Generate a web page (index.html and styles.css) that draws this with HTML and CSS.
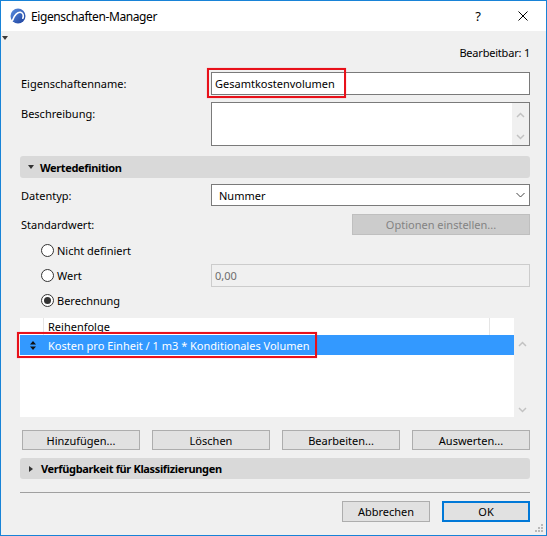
FILE: index.html
```html
<!DOCTYPE html>
<html lang="de">
<head>
<meta charset="utf-8">
<title>Eigenschaften-Manager</title>
<link rel="stylesheet" href="styles.css">
</head>
<body>
<div class="window">
  <div class="titlebar">
    <svg class="app-icon" width="16" height="16" viewBox="0 0 16 16">
      <defs>
        <linearGradient id="lg" x1="0" y1="0" x2="1" y2="1">
          <stop offset="0" stop-color="#5b8fe0"/>
          <stop offset="1" stop-color="#1c3f9c"/>
        </linearGradient>
      </defs>
      <circle cx="8" cy="8" r="7.5" fill="url(#lg)"/>
      <path d="M2.6 12.2 C4.2 7 7.6 3.6 11 4.4 C13.2 5 13.8 7.8 12.8 10.2" fill="none" stroke="#fff" stroke-width="1.6" stroke-linecap="round"/>
    </svg>
    <span class="title">Eigenschaften-Manager</span>
    <span class="help">?</span>
    <svg class="close" width="10" height="10" viewBox="0 0 10 10">
      <path d="M0.5 0.5 L9.5 9.5 M9.5 0.5 L0.5 9.5" stroke="#000" stroke-width="1"/>
    </svg>
  </div>

  <div class="content">
    <span class="corner-arrow"></span>
    <div class="editable">Bearbeitbar: 1</div>

    <div class="row row-name">
      <div class="label">Eigenschaftenname:</div>
      <div class="textbox">Gesamtkostenvolumen<span class="mark mark-name"></span></div>
    </div>

    <div class="row row-desc">
      <div class="label">Beschreibung:</div>
      <div class="textarea">
        <div class="vscroll">
          <svg class="chev" width="9" height="6" viewBox="0 0 9 6"><path d="M1 5 L4.5 1.5 L8 5" fill="none" stroke="#c2c2c2" stroke-width="1.5"/></svg>
          <svg class="chev" width="9" height="6" viewBox="0 0 9 6"><path d="M1 1 L4.5 4.5 L8 1" fill="none" stroke="#c2c2c2" stroke-width="1.5"/></svg>
        </div>
      </div>
    </div>

    <div class="section section-open"><span class="tri-down"></span>Wertedefinition</div>

    <div class="row row-type">
      <div class="label">Datentyp:</div>
      <div class="select">
        <span>Nummer</span>
        <svg width="9" height="6" viewBox="0 0 9 6"><path d="M0.5 1 L4.5 5 L8.5 1" fill="none" stroke="#444" stroke-width="1"/></svg>
      </div>
    </div>

    <div class="row row-default">
      <div class="label">Standardwert:</div>
      <div class="btn btn-disabled btn-options">Optionen einstellen...</div>
    </div>

    <div class="radios">
      <div class="radio-row">
        <div class="radio-opt"><span class="radio"></span>Nicht definiert</div>
      </div>
      <div class="radio-row">
        <div class="radio-opt"><span class="radio"></span>Wert</div>
        <div class="textbox textbox-disabled">0,00</div>
      </div>
      <div class="radio-row">
        <div class="radio-opt"><span class="radio radio-checked"></span>Berechnung</div>
      </div>
    </div>

    <div class="list-wrap">
      <div class="list">
        <div class="list-head">
          <div class="col-icon"></div>
          <div class="col-main">Reihenfolge</div>
          <div class="col-end"></div>
        </div>
        <div class="list-row selected">
          <div class="col-icon sort-icon">
            <svg width="6" height="9" viewBox="0 0 6 9"><path d="M3 0 L6 3.5 L0 3.5 Z M0 5.5 L6 5.5 L3 9 Z" fill="#111"/></svg>
          </div>
          <div class="col-main">Kosten pro Einheit / 1 m3 * Konditionales Volumen</div>
          <span class="mark mark-row"></span>
        </div>
      </div>
      <div class="list-scroll">
        <svg class="chev" width="9" height="6" viewBox="0 0 9 6"><path d="M1 5 L4.5 1.5 L8 5" fill="none" stroke="#c2c2c2" stroke-width="1.5"/></svg>
        <svg class="chev" width="9" height="6" viewBox="0 0 9 6"><path d="M1 1 L4.5 4.5 L8 1" fill="none" stroke="#c2c2c2" stroke-width="1.5"/></svg>
      </div>
    </div>

    <div class="actions">
      <div class="btn">Hinzufügen...</div>
      <div class="btn">Löschen</div>
      <div class="btn">Bearbeiten...</div>
      <div class="btn">Auswerten...</div>
    </div>

    <div class="section section-closed"><span class="tri-right"></span>Verfügbarkeit für Klassifizierungen</div>

    <div class="separator"></div>

    <div class="footer">
      <div class="btn btn-footer">Abbrechen</div>
      <div class="btn btn-footer btn-default">OK</div>
    </div>
  </div>

  <svg class="grip" width="10" height="10" viewBox="0 0 10 10">
    <rect x="6" y="0" width="2" height="2" fill="#b9b9b9"/>
    <rect x="3" y="3" width="2" height="2" fill="#b9b9b9"/>
    <rect x="6" y="3" width="2" height="2" fill="#b9b9b9"/>
    <rect x="0" y="6" width="2" height="2" fill="#b9b9b9"/>
    <rect x="3" y="6" width="2" height="2" fill="#b9b9b9"/>
    <rect x="6" y="6" width="2" height="2" fill="#b9b9b9"/>
  </svg>
</div>
</body>
</html>
```

FILE: styles.css
```css
* {
  box-sizing: border-box;
  margin: 0;
  padding: 0;
}

html, body {
  width: 547px;
  height: 536px;
  overflow: hidden;
}

body {
  font-family: "Noto Sans", "Open Sans", sans-serif;
  font-size: 11px;
  color: #000;
  background: #fff;
}

.window {
  width: 547px;
  height: 536px;
  border: 1px solid #1883d7;
  background: #f0f0f0;
  display: flex;
  flex-direction: column;
  position: relative;
}

/* Title bar */
.titlebar {
  flex: none;
  height: 30px;
  background: #fff;
  display: flex;
  align-items: center;
  padding-left: 9px;
}

.app-icon {
  flex: none;
}

.title {
  margin-left: 5px;
  font-size: 12px;
  letter-spacing: -0.4px;
}

.help {
  margin-left: auto;
  width: 14px;
  text-align: center;
  font-size: 13px;
  margin-right: 33px;
}

.close {
  margin-right: 18px;
}

/* Content */
.content {
  flex: 1;
  position: relative;
  padding: 0 16px 0 19px;
  display: flex;
  flex-direction: column;
}

.corner-arrow {
  position: absolute;
  left: 1px;
  top: 5px;
  width: 0;
  height: 0;
  border-left: 3px solid transparent;
  border-right: 3px solid transparent;
  border-top: 4px solid #3a3a3a;
}

.editable {
  margin-top: 15px;
  height: 14px;
  line-height: 14px;
  text-align: right;
  letter-spacing: -0.2px;
}

.row {
  display: grid;
  grid-template-columns: 191px 319px;
}

.label {
  padding-left: 1px;
  align-self: center;
}

.row-name {
  margin-top: 12px;
  height: 23px;
}

.textbox {
  position: relative;
  height: 23px;
  border: 1px solid #7a7a7a;
  background: #fff;
  padding-left: 3px;
  display: flex;
  align-items: center;
}

.textbox-disabled {
  border-color: #cccccc;
  background: #f0f0f0;
  color: #6d6d6d;
}

.mark {
  position: absolute;
  border: 2px solid #e8111a;
  box-shadow: 0 0 1px 0 rgba(232, 17, 26, 0.45);
  pointer-events: none;
}

.mark-name {
  left: -5px;
  top: -5px;
  width: 139px;
  height: 30px;
}

.row-desc {
  margin-top: 7px;
  height: 44px;
}

.row-desc .label {
  align-self: start;
  padding-top: 4px;
}

.textarea {
  border: 1px solid #7a7a7a;
  background: #fff;
  display: flex;
  justify-content: flex-end;
}

.vscroll {
  width: 17px;
  background: #f0f0f0;
  display: flex;
  flex-direction: column;
  align-items: center;
  justify-content: space-between;
  padding: 9px 0 5px;
}

.chev {
  display: block;
}

/* Sections */
.section {
  height: 22px;
  background: #d9d9d9;
  border-radius: 3px;
  display: flex;
  align-items: center;
  padding-left: 8px;
  font-weight: bold;
  letter-spacing: -0.35px;
}

.section-open {
  margin-top: 10px;
}

.section-closed {
  margin-top: 8px;
  height: 21px;
}

.tri-down {
  width: 0;
  height: 0;
  border-left: 3.5px solid transparent;
  border-right: 3.5px solid transparent;
  border-top: 4px solid #333;
  margin-right: 6px;
}

.tri-right {
  width: 0;
  height: 0;
  border-top: 3.5px solid transparent;
  border-bottom: 3.5px solid transparent;
  border-left: 4px solid #333;
  margin-left: 1px;
  margin-right: 8px;
}

.row-type {
  margin-top: 6px;
  height: 22px;
}

.select {
  border: 1px solid #7a7a7a;
  background: #fff;
  display: flex;
  align-items: center;
  justify-content: space-between;
  padding: 0 4px 0 7px;
}

.row-default {
  margin-top: 8px;
  height: 21px;
}

/* Buttons */
.btn {
  background: #e1e1e1;
  border: 1px solid #adadad;
  display: flex;
  align-items: center;
  justify-content: center;
  white-space: nowrap;
}

.btn-disabled {
  background: #cccccc;
  border-color: #bfbfbf;
  color: #838383;
}

.btn-options {
  justify-self: end;
  width: 178px;
}

/* Radios */
.radios {
  margin-top: 3px;
}

.radio-row {
  height: 25px;
  display: grid;
  grid-template-columns: 191px 319px;
  align-items: center;
}

.radio-opt {
  display: flex;
  align-items: center;
  padding-left: 21px;
  gap: 3px;
}

.radio {
  width: 13px;
  height: 13px;
  border: 1px solid #333;
  border-radius: 50%;
  background: #fff;
  display: flex;
  align-items: center;
  justify-content: center;
}

.radio-checked::after {
  content: "";
  width: 7px;
  height: 7px;
  border-radius: 50%;
  background: #333;
}

/* List */
.list-wrap {
  margin-top: 5px;
  height: 99px;
  display: flex;
}

.list {
  width: 494px;
  background: #fff;
}

.list-head {
  height: 17px;
  display: flex;
}

.col-icon {
  width: 24px;
  border-right: 1px solid #e5e5e5;
  flex: none;
}

.col-main {
  width: 445px;
  padding-left: 4px;
  display: flex;
  align-items: center;
  flex: none;
}

.col-end {
  border-left: 1px solid #e5e5e5;
  flex: 1;
}

.list-row {
  position: relative;
  height: 20px;
  display: flex;
}

.list-row.selected {
  background: #3399ff;
  color: #fff;
}

.list-row.selected .col-icon {
  border-right-color: transparent;
}

.sort-icon {
  display: flex;
  align-items: center;
  padding-left: 10px;
}

.mark-row {
  left: -3px;
  top: -3px;
  width: 300px;
  height: 26px;
}

.list-scroll {
  flex: 1;
  display: flex;
  flex-direction: column;
  align-items: center;
  justify-content: space-between;
  padding: 23px 0 4px 1px;
}

.actions {
  margin-top: 13px;
  margin-left: 2px;
  height: 20px;
  display: grid;
  grid-template-columns: repeat(4, 118px);
  column-gap: 12px;
}

.separator {
  margin-top: 13px;
  height: 1px;
  background: #a0a0a0;
}

.footer {
  margin-top: 8px;
  height: 21px;
  display: flex;
  justify-content: flex-end;
  gap: 12px;
}

.btn-footer {
  width: 88px;
}

.btn-default {
  border: 2px solid #0078d7;
}

.grip {
  position: absolute;
  right: 1px;
  bottom: 1px;
}
```
